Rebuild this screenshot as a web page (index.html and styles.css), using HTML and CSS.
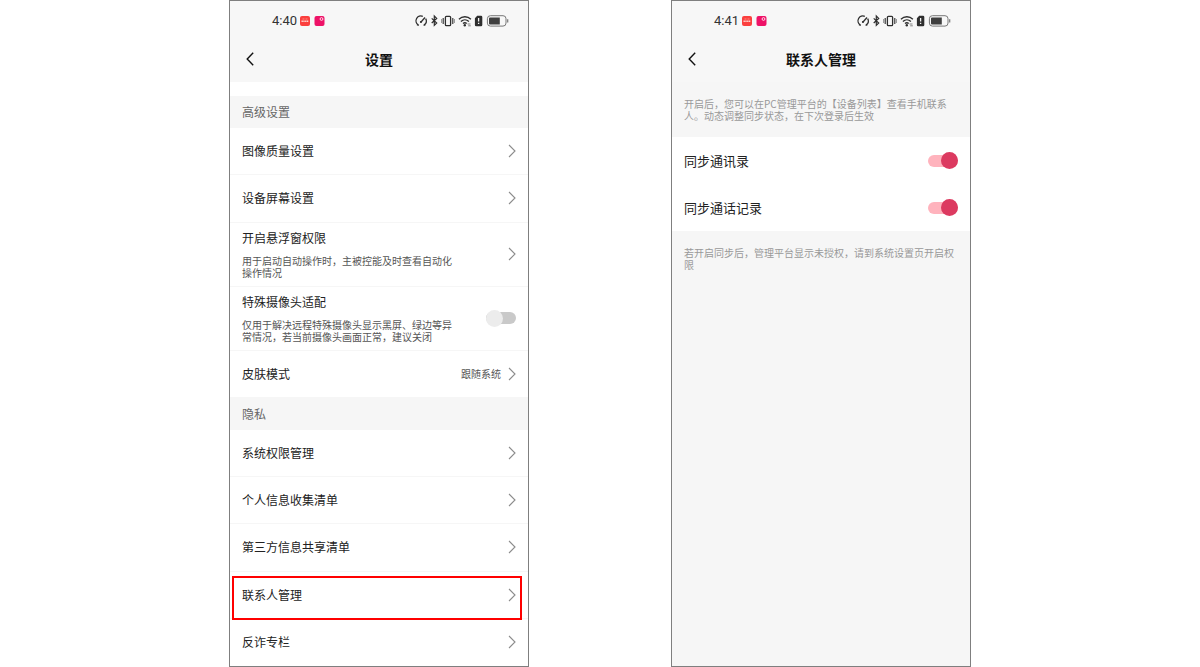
FILE: index.html
```html
<!DOCTYPE html>
<html lang="zh-CN">
<head>
    <meta charset="UTF-8">
    <meta name="viewport" content="width=device-width, initial-scale=1.0">
    <title>设置</title>
    <link rel="stylesheet" href="styles.css">
</head>
<body>
    <!-- Iconos compartidos -->
    <svg class="sprite" aria-hidden="true">
        <symbol id="chevron" viewBox="0 0 8 14">
            <path d="M1 1l6 6-6 6" fill="none" stroke="#8c8c8c" stroke-width="1.1"/>
        </symbol>
        <symbol id="back" viewBox="0 0 8 14">
            <path d="M7.2 .8L1.2 7l6 6.2" fill="none" stroke="#111" stroke-width="1.4"/>
        </symbol>
        <symbol id="apps" viewBox="0 0 25 12">
            <rect x="0" y="1" width="10" height="10" rx="2" fill="#fb3f3e"/>
            <path d="M2.5 4h2M5.5 4h2" stroke="#ff9c94" stroke-width=".8"/>
            <path d="M1.5 6.3h7" stroke="#ffd5cf" stroke-width="1.5" stroke-dasharray="1.4 .4"/>
            <rect x="14.5" y="1" width="10" height="10" rx="2" fill="#ee1267"/>
            <circle cx="21.5" cy="4" r="1.4" fill="#ee1267" stroke="#ffd9e8" stroke-width="1"/>
        </symbol>
        <symbol id="status" viewBox="0 0 94 14">
            <g fill="none" stroke="#2e2e2e" stroke-width="1.3">
                <path d="M3.2 10.9A4.9 4.9 0 0 1 7.8 2.3M10.7 4.6a4.9 4.9 0 0 1-1.5 6.3M2 10.6l1.8 .8M8.6 11.4l1.8-.8"/>
                <path d="M5.8 8.2l4.2-4.7"/>
                <path d="M16.7 4.4l5 4.6-2.4 2.4V2l2.4 2.4-5 4.6" stroke-width="1.2"/>
                <rect x="30.4" y="2.3" width="5.2" height="9.4" rx="1"/>
                <path d="M28.2 4v6M37.8 4v6" stroke-width="1.1"/>
                <path d="M26.6 5v4M39.4 5v4" stroke-width=".8" stroke="#777"/>
                <path d="M43.9 5.2c3.4-3.3 8.6-3.3 12 0M45.9 7.5c2.3-2.2 5.7-2.2 8 0M48 9.6c1.1-1 2.6-1 3.7 0" stroke-width="1.3"/>
            </g>
            <circle cx="49.8" cy="11.2" r="1.2" fill="#2e2e2e"/>
            <path d="M52.5 10h3M53.2 11.8h2.6" stroke="#777" stroke-width=".9"/>
            <circle cx="5.9" cy="8" r="1" fill="#2e2e2e"/>
            <path d="M62.2 1.8H66a1.3 1.3 0 0 1 1.3 1.3v7.8a1.3 1.3 0 0 1-1.3 1.3h-4.8a1.3 1.3 0 0 1-1.3-1.3V4.2z" fill="#2e2e2e"/>
            <path d="M63.6 4v3.6M63.6 8.8V10" stroke="#f7f7f7" stroke-width="1.3"/>
            <rect x="72.4" y="1.7" width="18.6" height="10.4" rx="3" fill="none" stroke="#777" stroke-width="1"/>
            <path d="M75 3.4h9.8v7H75a1 1 0 0 1-1-1v-5a1 1 0 0 1 1-1z" fill="#3f3f3f"/>
            <path d="M92.7 5.2v3.4" stroke="#777" stroke-width="1.2"/>
        </symbol>
    </svg>

    <div class="container">
        <!-- Ajustes -->
        <section class="phone">
            <header class="phone-header">
                <div class="status-bar">
                    <span class="time">4:40</span>
                    <svg class="status-apps"><use href="#apps"/></svg>
                    <svg class="status-icons"><use href="#status"/></svg>
                </div>
                <div class="nav-bar">
                    <a href="#" class="back" aria-label="返回"><svg class="arrow"><use href="#back"/></svg></a>
                    <h1>设置</h1>
                </div>
            </header>

            <main class="settings">
                <h2 class="group-title">高级设置</h2>
                <a href="#" class="row"><span>图像质量设置</span><svg class="arrow"><use href="#chevron"/></svg></a>
                <a href="#" class="row"><span>设备屏幕设置</span><svg class="arrow"><use href="#chevron"/></svg></a>
                <a href="#" class="row row-detail">
                    <span class="row-text">
                        <span>开启悬浮窗权限</span>
                        <small>用于启动自动操作时，主被控能及时查看自动化操作情况</small>
                    </span>
                    <svg class="arrow"><use href="#chevron"/></svg>
                </a>
                <div class="row row-detail">
                    <label class="row-text" for="camera">
                        <span>特殊摄像头适配</span>
                        <small>仅用于解决远程特殊摄像头显示黑屏、绿边等异常情况，若当前摄像头画面正常，建议关闭</small>
                    </label>
                    <input type="checkbox" id="camera" class="toggle">
                </div>
                <a href="#" class="row"><span>皮肤模式</span><span class="value">跟随系统</span><svg class="arrow"><use href="#chevron"/></svg></a>

                <h2 class="group-title">隐私</h2>
                <a href="#" class="row"><span>系统权限管理</span><svg class="arrow"><use href="#chevron"/></svg></a>
                <a href="#" class="row"><span>个人信息收集清单</span><svg class="arrow"><use href="#chevron"/></svg></a>
                <a href="#" class="row"><span>第三方信息共享清单</span><svg class="arrow"><use href="#chevron"/></svg></a>
                <a href="#" class="row highlight"><span>联系人管理</span><svg class="arrow"><use href="#chevron"/></svg></a>
                <a href="#" class="row"><span>反诈专栏</span><svg class="arrow"><use href="#chevron"/></svg></a>
            </main>
        </section>

        <!-- Gestión de contactos -->
        <section class="phone">
            <header class="phone-header">
                <div class="status-bar">
                    <span class="time">4:41</span>
                    <svg class="status-apps"><use href="#apps"/></svg>
                    <svg class="status-icons"><use href="#status"/></svg>
                </div>
                <div class="nav-bar">
                    <a href="#" class="back" aria-label="返回"><svg class="arrow"><use href="#back"/></svg></a>
                    <h1>联系人管理</h1>
                </div>
            </header>

            <main class="contacts">
                <p class="note">开启后，您可以在PC管理平台的【设备列表】查看手机联系人。动态调整同步状态，在下次登录后生效</p>
                <div class="switch-row">
                    <label for="sync-contacts">同步通讯录</label>
                    <input type="checkbox" id="sync-contacts" class="toggle" checked>
                </div>
                <div class="switch-row">
                    <label for="sync-calls">同步通话记录</label>
                    <input type="checkbox" id="sync-calls" class="toggle" checked>
                </div>
                <p class="note">若开启同步后，管理平台显示未授权，请到系统设置页开启权限</p>
            </main>
        </section>
    </div>
</body>
</html>
```
FILE: styles.css
```css
* {
    margin: 0;
    padding: 0;
    box-sizing: border-box;
}

body {
    font-family: 'Noto Sans CJK SC', sans-serif;
    background: white;
    color: #222;
}

a {
    color: inherit;
    text-decoration: none;
}

.sprite {
    display: none;
}

.container {
    display: flex;
    justify-content: center;
    gap: 142px;
    min-height: 100vh;
}

.phone {
    display: flex;
    flex-direction: column;
    flex: 0 1 300px;
    background: #f6f6f6;
    border: 1px solid #7f7f7f;
}

.phone-header {
    background: #f7f7f7;
    padding-bottom: 5px;
}

.status-bar {
    display: flex;
    align-items: center;
    height: 40px;
    padding: 0 19px 0 42px;
}

.time {
    font-family: Roboto, sans-serif;
    font-size: 13px;
    line-height: 16px;
    color: #333;
}

.status-apps {
    width: 25px;
    height: 12px;
    margin-left: 3px;
}

.status-icons {
    width: 94px;
    height: 14px;
    margin-left: auto;
}

.nav-bar {
    display: grid;
    grid-template-columns: 40px 1fr 40px;
    align-items: center;
    height: 36px;
}

.nav-bar h1 {
    font-size: 14px;
    font-weight: bold;
    line-height: 20px;
    text-align: center;
    color: #111;
}

.back {
    display: flex;
    padding-left: 16px;
}

.arrow {
    flex: none;
    width: 8px;
    height: 14px;
}

.settings {
    display: flex;
    flex-direction: column;
    flex: 1;
    padding-top: 14px;
    background: white;
}

.group-title {
    padding: 8px 12px;
    font-size: 12px;
    font-weight: normal;
    line-height: 16px;
    color: #666;
    background: #f6f6f6;
}

.row {
    position: relative;
    display: flex;
    align-items: center;
    justify-content: space-between;
    flex: 1 0 47px;
    padding: 0 12px;
    font-size: 12px;
    line-height: 16px;
    border-bottom: 1px solid #f6f6f6;
}

.row:last-child {
    border-bottom: none;
}

.row-detail {
    flex: none;
    padding: 7px 12px;
}

.row-text {
    display: flex;
    flex-direction: column;
    gap: 9px;
    max-width: 216px;
}

.row-text small {
    font-size: 10px;
    line-height: 12px;
    color: #555;
}

.value {
    margin-left: auto;
    margin-right: 7px;
    font-size: 10px;
    color: #555;
}

.highlight::after {
    content: '';
    position: absolute;
    top: 4px;
    right: 6px;
    bottom: -2px;
    left: 2px;
    border: 2px solid #f00;
}

.note {
    padding: 16px 16px 15px 12px;
    font-size: 10px;
    line-height: 12px;
    color: #999;
}

.switch-row {
    display: flex;
    align-items: center;
    justify-content: space-between;
    height: 47px;
    padding: 0 12px;
    font-size: 13px;
    line-height: 18px;
    background: white;
}

.toggle {
    appearance: none;
    display: flex;
    align-items: center;
    flex: none;
    width: 30px;
    height: 12px;
    border-radius: 6px;
    background: #c9c9c9;
    cursor: pointer;
}

.toggle::before {
    content: '';
    flex: none;
    width: 17px;
    height: 17px;
    border-radius: 50%;
    background: #ececec;
}

.toggle:checked {
    justify-content: flex-end;
    background: #ffb3bd;
}

.toggle:checked::before {
    background: #dc3a60;
}
```
